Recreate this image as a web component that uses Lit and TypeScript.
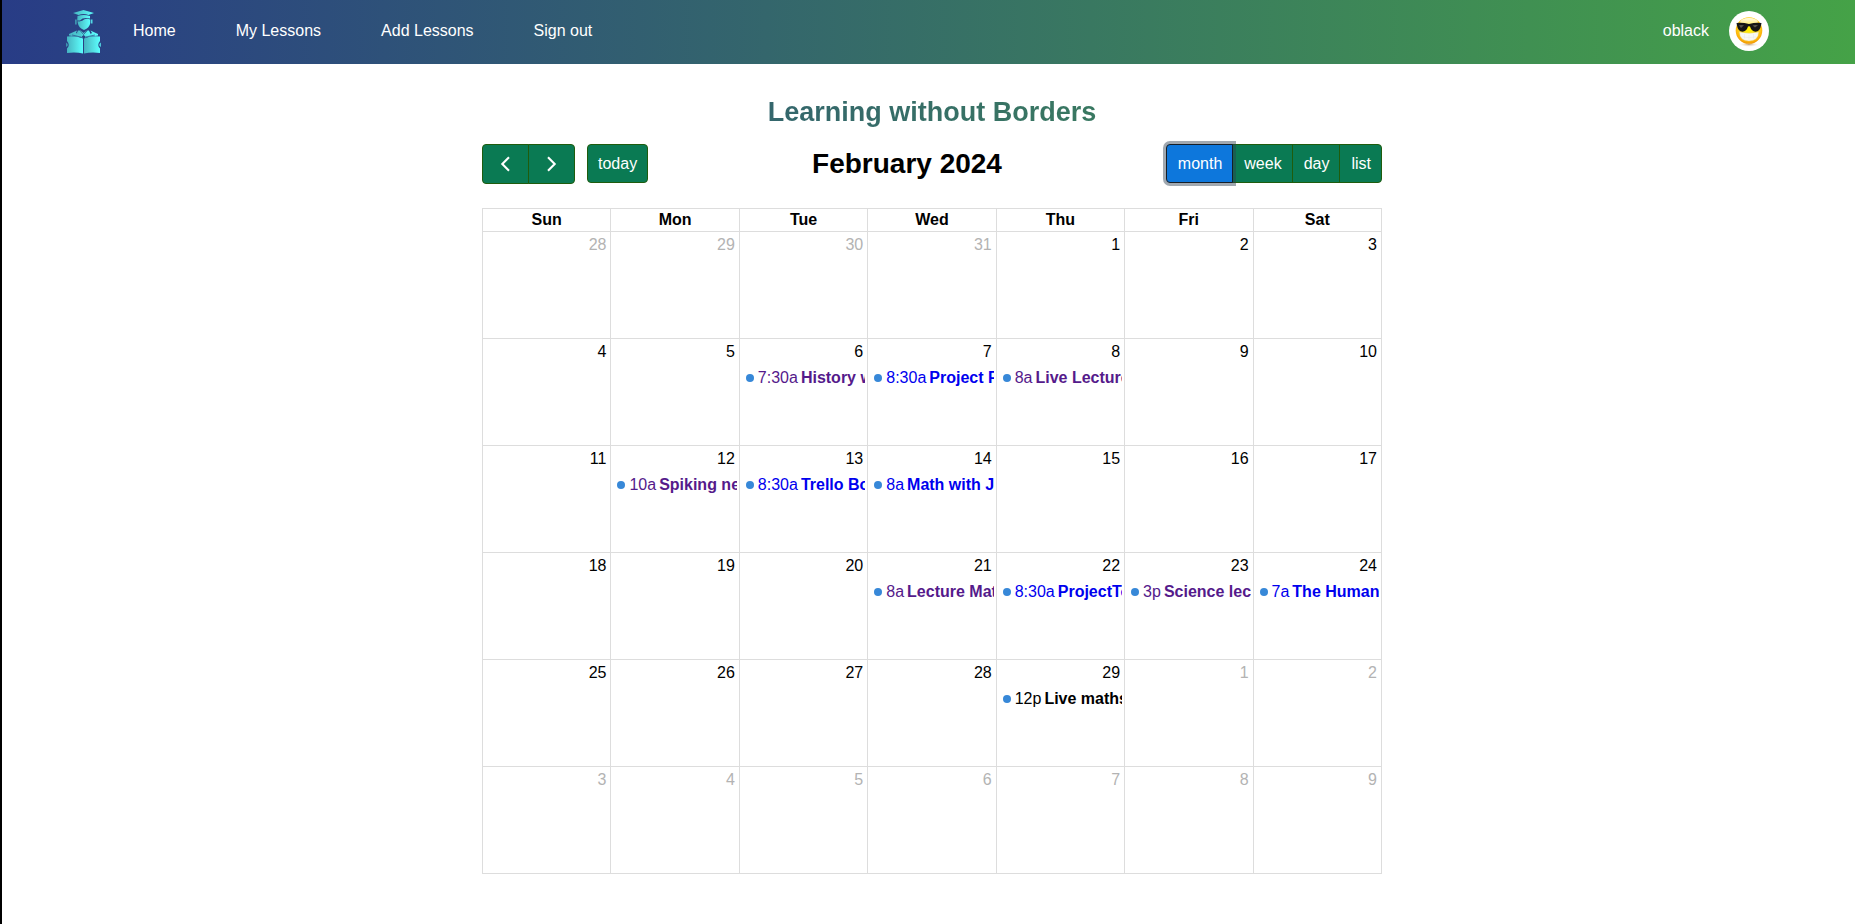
import { LitElement, html, css, svg, nothing } from "lit";
import { customElement, property, state } from "lit/decorators.js";
import { classMap } from "lit/directives/class-map.js";

interface Lesson {
  time: string;
  title: string;
  link?: "new" | "visited";
}

interface Day {
  label: number;
  other: boolean;
  lesson?: Lesson;
}

const WEEKDAYS = ["Sun", "Mon", "Tue", "Wed", "Thu", "Fri", "Sat"];
const VIEWS = ["month", "week", "day", "list"];

const LESSONS: Record<number, Lesson> = {
  6: { time: "7:30a", title: "History with Ben", link: "visited" },
  7: { time: "8:30a", title: "Project Planning", link: "new" },
  8: { time: "8a", title: "Live Lectures", link: "visited" },
  12: { time: "10a", title: "Spiking networks", link: "visited" },
  13: { time: "8:30a", title: "Trello Board", link: "new" },
  14: { time: "8a", title: "Math with John", link: "new" },
  21: { time: "8a", title: "Lecture Maths", link: "visited" },
  22: { time: "8:30a", title: "ProjectTools", link: "new" },
  23: { time: "3p", title: "Science lecture", link: "visited" },
  24: { time: "7a", title: "The Human Body", link: "new" },
  29: { time: "12p", title: "Live maths class" },
};

function buildWeeks(): Day[][] {
  const weeks: Day[][] = [];
  for (let w = 0; w < 6; w++) {
    const week: Day[] = [];
    for (let d = 0; d < 7; d++) {
      const offset = w * 7 + d - 3;
      if (offset < 1) week.push({ label: 31 + offset, other: true });
      else if (offset > 29) week.push({ label: offset - 29, other: true });
      else week.push({ label: offset, other: false, lesson: LESSONS[offset] });
    }
    weeks.push(week);
  }
  return weeks;
}

const logo = svg`
  <defs>
    <linearGradient id="teal" x1="0" x2="1" y1="0" y2="0">
      <stop offset="0" stop-color="#45b4c2"></stop>
      <stop offset="0.5" stop-color="#52dade"></stop>
      <stop offset="1" stop-color="#5cffff"></stop>
    </linearGradient>
  </defs>
  <g fill="url(#teal)">
    <path d="M7 3 L17.500 0 L28 3 L22.500 5 Q17.500 3.200 12.500 5 Z"></path>
    <path d="M11.500 6 Q17.500 3.800 24 6 L24 8.500 Q17 7 14 10.500 L11.200 10.500 Z"></path>
    <path d="M11.500 11.300 Q16 12 18.500 9.300 Q21 8.300 24.300 9.500 L24.300 13 Q23.500 18 18 20 Q12.500 18 11.800 13 Z"></path>
    <path d="M9.300 9.500 h1.200 v5 h-1.200 Z M25.200 9.500 h1.200 v4 h-1.200 Z"></path>
    <path d="M12 20.500 L14.500 20.500 L17.700 23 L21 20.500 L23 20.500 L25 25 L20 27 L17.700 25 L15 27 L10 25 Z"></path>
    <path d="M3 24 L11 20.500 L10 23 L17 27.500 L3 25.500 Z M32 24 L24.500 20.500 L26 23 L18.500 27.500 L32 25.500 Z"></path>
    <path d="M1 26.500 Q10 25.500 17 28.500 L17 43.500 Q10 42 1 43 L1 38.500 Q4.500 35 1 31 Z"></path>
    <path d="M34 26.500 Q25 25.500 18 28.500 L18 43.500 Q25 42 34 43 L34 38.500 Q30.500 35 34 31 Z"></path>
    <path d="M0.300 32.500 Q3 35 0.300 37 Z M34.700 32.500 Q32 35 34.700 37 Z"></path>
  </g>
  <path d="M14 20.500 L17.500 24.500 L21.500 20.500 M6 25 L15 27 M29 25 L20 27" fill="none" stroke="#2a4a86" stroke-width="0.700"></path>`;

const avatar = svg`
  <defs>
    <radialGradient id="skin" cx="0.5" cy="0.4" r="0.62">
      <stop offset="0" stop-color="#fff200"></stop>
      <stop offset="0.55" stop-color="#ffdc1c"></stop>
      <stop offset="0.85" stop-color="#fbaf0b"></stop>
      <stop offset="1" stop-color="#e98f00"></stop>
    </radialGradient>
    <linearGradient id="shine" x1="0" x2="0" y1="0" y2="1">
      <stop offset="0" stop-color="#fff" stop-opacity="0.9"></stop>
      <stop offset="1" stop-color="#fff" stop-opacity="0.3"></stop>
    </linearGradient>
    <radialGradient id="shade">
      <stop offset="0" stop-color="#b98d56" stop-opacity="0.8"></stop>
      <stop offset="1" stop-color="#fff" stop-opacity="0"></stop>
    </radialGradient>
  </defs>
  <circle cx="20" cy="20" r="20" fill="#fff"></circle>
  <ellipse cx="20" cy="33.500" rx="11" ry="2.500" fill="url(#shade)"></ellipse>
  <circle cx="20" cy="19.500" r="13.300" fill="url(#skin)"></circle>
  <ellipse cx="20" cy="11" rx="9" ry="4" fill="url(#shine)"></ellipse>
  <path d="M10.500 21 Q20 23.500 29.500 21 Q29.500 29.500 20 30 Q10.500 29.500 10.500 21 Z" fill="#f8f8f6" stroke="#e8d8a0" stroke-width="0.400"></path>
  <path d="M13 25.800 Q20 27.500 27 25.800 M15.500 23 V27.500 M20 24 V29 M24.500 23 V27.500" fill="none" stroke="#e2e2e0" stroke-width="0.400"></path>
  <path d="M7.500 12 Q13 11 20 13 Q27 11 32.500 12 L32 14.500 Q31 20.500 26.500 20.800 Q22.500 20.500 21 15.500 Q20 14.800 19 15.500 Q17.500 20.500 13.500 20.800 Q9 20.500 8 14.500 Z" fill="#151515"></path>
  <path d="M10 14.500 Q11 13.500 15 14.300 L12 17 Z M23.500 14.500 Q26 13.500 29 14.300 L26 16.500 Z" fill="#55544c"></path>`;

@customElement("site-header")
export class SiteHeader extends LitElement {
  static styles = css`
    :host {
      display: block;
    }
    .bar {
      display: flex;
      align-items: center;
      height: 64px;
      padding: 0 86px 0 64px;
      box-sizing: border-box;
      background: linear-gradient(to right, #283c86, #45a247);
      color: #fff;
    }
    .brand {
      display: flex;
      margin-right: 32px;
    }
    .logo {
      width: 35px;
      height: 44px;
    }
    .links {
      display: flex;
      gap: 60px;
      flex: 1;
      padding-bottom: 2px;
    }
    .link {
      color: inherit;
      text-decoration: none;
      white-space: nowrap;
    }
    .user {
      display: flex;
      align-items: center;
      gap: 20px;
      padding-bottom: 2px;
    }
    .avatar {
      width: 40px;
      height: 40px;
    }
  `;

  render() {
    return html`
      <header class="bar">
        <a class="brand" href="#home" aria-label="Learning without Borders">
          <svg class="logo" viewBox="0 0 35 44" aria-hidden="true">${logo}</svg>
        </a>
        <nav class="links">
          ${["Home", "My Lessons", "Add Lessons", "Sign out"].map(
            (name) => html`<a class="link" href="#${name.toLowerCase().replace(" ", "-")}">${name}</a>`
          )}
        </nav>
        <div class="user">
          <a class="link" href="#profile">oblack</a>
          <svg class="avatar" viewBox="0 0 40 40" aria-hidden="true">${avatar}</svg>
        </div>
      </header>
    `;
  }
}

@customElement("calendar-toolbar")
export class CalendarToolbar extends LitElement {
  @state() private view = "month";

  static styles = css`
    :host {
      display: block;
    }
    .toolbar {
      display: flex;
      align-items: center;
      justify-content: space-between;
      height: 40px;
    }
    .side {
      display: flex;
      align-items: flex-start;
      gap: 12px;
      height: 40px;
    }
    .group {
      display: flex;
      isolation: isolate;
    }
    .btn {
      height: 39px;
      margin: 0;
      padding: 0 10px;
      border: 1px solid #1f5c0d;
      border-radius: 4px;
      background: #0a7a53;
      color: #fff;
      font: inherit;
      line-height: 24px;
      cursor: pointer;
    }
    .group .btn:not(:first-child) {
      margin-left: -1px;
      border-top-left-radius: 0;
      border-bottom-left-radius: 0;
    }
    .group .btn:not(:last-child) {
      border-top-right-radius: 0;
      border-bottom-right-radius: 0;
    }
    .view {
      padding: 0 10px 0 11px;
    }
    .group .btn.active {
      z-index: 1;
      position: relative;
      border-color: #151e27;
      background: #0d77dc;
      box-shadow: 0 0 0 3px rgba(44, 62, 80, 0.45);
    }
    .step {
      display: flex;
      align-items: center;
      justify-content: center;
      width: 47px;
      height: 40px;
    }
    .chevron {
      flex: none;
      width: 24px;
      height: 24px;
    }
    .month {
      margin: 0;
      font-size: 28px;
      line-height: 32px;
      color: #000;
    }
  `;

  render() {
    return html`
      <div class="toolbar">
        <div class="side">
          <div class="group">
            <button class="btn step" aria-label="Previous month">
              <svg class="chevron" viewBox="0 0 24 24" fill="none" stroke="#fff" stroke-width="2.100">
                <path d="M15 5.300 L8.300 12 L15 18.700"></path>
              </svg>
            </button>
            <button class="btn step" aria-label="Next month">
              <svg class="chevron" viewBox="0 0 24 24" fill="none" stroke="#fff" stroke-width="2.100">
                <path d="M8 5.300 L14.700 12 L8 18.700"></path>
              </svg>
            </button>
          </div>
          <button class="btn">today</button>
        </div>
        <h2 class="month">February 2024</h2>
        <div class="side">
          <div class="group">
            ${VIEWS.map(
              (v) => html`<button
                class=${classMap({ btn: true, view: true, active: v === this.view })}
                aria-pressed=${v === this.view}
                @click=${() => (this.view = v)}
              >${v}</button>`
            )}
          </div>
        </div>
      </div>
    `;
  }
}

@customElement("month-grid")
export class MonthGrid extends LitElement {
  @property({ attribute: false }) weeks: Day[][] = [];

  static styles = css`
    :host {
      display: block;
    }
    .grid {
      width: 100%;
      border-collapse: collapse;
      table-layout: fixed;
      line-height: 18px;
    }
    .head,
    .day {
      border: 1px solid #ddd;
      padding: 0;
    }
    .head {
      height: 22px;
      font-weight: bold;
      text-align: center;
    }
    .day {
      height: 106px;
      vertical-align: top;
    }
    .number {
      padding: 4px;
      text-align: right;
    }
    .other {
      color: #b3b3b3;
    }
    .event {
      display: flex;
      align-items: center;
      margin: 2px 2px 0;
      padding: 2px 0;
      overflow: hidden;
      white-space: nowrap;
      color: #000;
      text-decoration: none;
    }
    .new {
      color: #0000ee;
    }
    .visited {
      color: #551a8b;
    }
    .dot {
      flex: none;
      width: 8px;
      height: 8px;
      margin: 0 4px;
      border-radius: 50%;
      background: #3788d8;
    }
    .time {
      margin-right: 3px;
    }
    .title {
      flex: 1;
      min-width: 0;
      overflow: hidden;
      font-weight: bold;
    }
  `;

  private renderLesson(lesson: Lesson) {
    const body = html`<span class="dot"></span><span class="time">${lesson.time}</span
      ><span class="title">${lesson.title}</span>`;
    return lesson.link
      ? html`<a class="event ${lesson.link}" href="#lesson">${body}</a>`
      : html`<div class="event">${body}</div>`;
  }

  render() {
    return html`
      <table class="grid">
        <thead>
          <tr>
            ${WEEKDAYS.map((d) => html`<th class="head" scope="col">${d}</th>`)}
          </tr>
        </thead>
        <tbody>
          ${this.weeks.map(
            (week) => html`<tr>
              ${week.map(
                (day) => html`<td class="day">
                  <div class=${classMap({ number: true, other: day.other })}>${day.label}</div>
                  ${day.lesson ? this.renderLesson(day.lesson) : nothing}
                </td>`
              )}
            </tr>`
          )}
        </tbody>
      </table>
    `;
  }
}

@customElement("app-root")
export class AppRoot extends LitElement {
  private weeks = buildWeeks();

  static styles = css`
    :host {
      display: block;
      box-sizing: border-box;
      min-height: 100vh;
      border-left: 2px solid #000;
      background: #fff;
      color: #000;
      font-family: "Liberation Sans", Arial, sans-serif;
      font-size: 16px;
      line-height: 18px;
    }
    .content {
      padding: 32px 0 48px 7px;
    }
    .heading {
      margin: 0;
      background: linear-gradient(to right, #283c86, #45a247);
      background-clip: text;
      -webkit-background-clip: text;
      color: transparent;
      font-size: 27px;
      line-height: 32px;
      text-align: center;
    }
    .calendar {
      display: flex;
      flex-direction: column;
      gap: 24px;
      max-width: 900px;
      margin: 16px auto 0;
    }
  `;

  render() {
    return html`
      <site-header></site-header>
      <main class="content">
        <h1 class="heading">Learning without Borders</h1>
        <section class="calendar">
          <calendar-toolbar></calendar-toolbar>
          <month-grid .weeks=${this.weeks}></month-grid>
        </section>
      </main>
    `;
  }
}
